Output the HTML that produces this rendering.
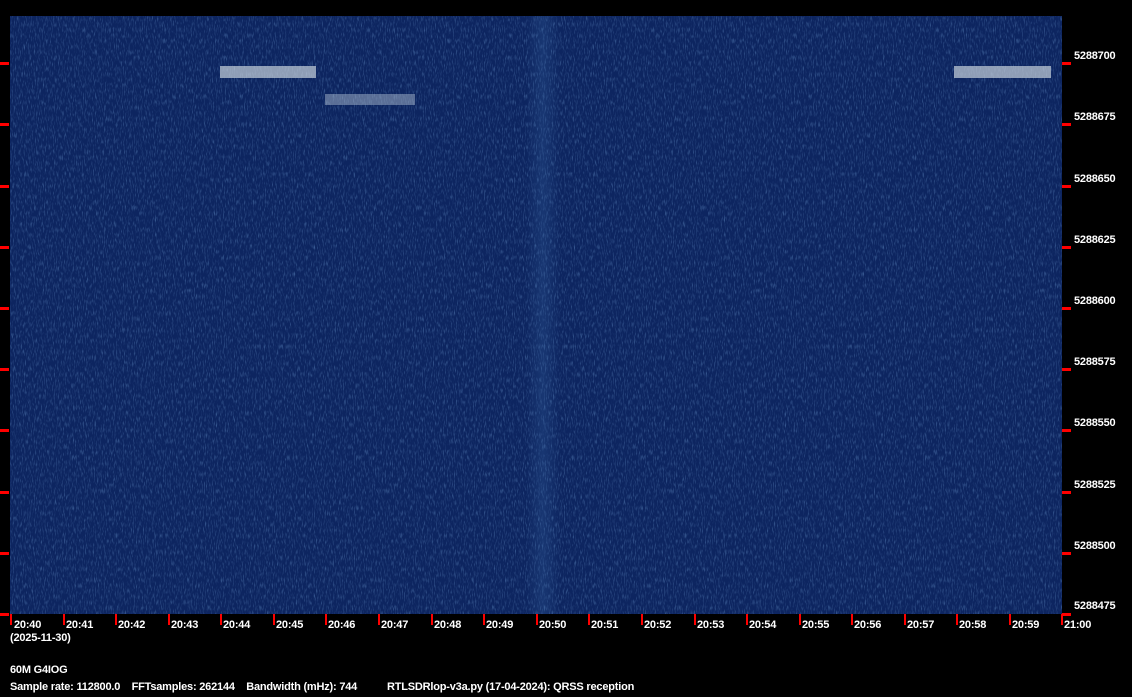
<!DOCTYPE html>
<html><head><meta charset="utf-8"><style>
html,body{margin:0;padding:0;background:#000;}
body{width:1132px;height:697px;position:relative;overflow:hidden;font-family:"Liberation Sans",sans-serif;font-weight:bold;font-size:11px;color:#fff;}
.t{position:absolute;white-space:nowrap;line-height:12px;letter-spacing:-0.2px;}
</style></head><body>
<svg width="1132" height="697" style="position:absolute;left:0;top:0">
<defs>
<filter id="n" x="0" y="0" width="100%" height="100%">
<feTurbulence type="fractalNoise" baseFrequency="0.9 0.18" numOctaves="2" seed="3"/>
<feColorMatrix type="matrix" values="0 0 0 0 0.15  0 0 0 0 0.32  0 0 0 0 0.62  0 0 0 1.2 -0.6"/>
</filter>
<linearGradient id="band" x1="0" x2="1">
<stop offset="0" stop-color="#3a6aa8" stop-opacity="0"/>
<stop offset="0.5" stop-color="#3a6aa8" stop-opacity="0.25"/>
<stop offset="1" stop-color="#3a6aa8" stop-opacity="0"/>
</linearGradient>
</defs>
<rect x="10" y="16" width="1052" height="598" fill="#0d2560"/>
<rect x="10" y="16" width="1052" height="598" filter="url(#n)"/>
<rect x="526" y="16" width="34" height="598" fill="url(#band)"/>
<rect x="220" y="66" width="96" height="12" fill="#c8d2dc" opacity="0.7"/>
<rect x="325" y="94" width="90" height="11" fill="#a8b8cc" opacity="0.5"/>
<rect x="954" y="66" width="97" height="12" fill="#c8d2dc" opacity="0.7"/>
<g fill="#f00">
<rect x="0" y="62" width="9" height="3"/><rect x="0" y="123" width="9" height="3"/><rect x="0" y="185" width="9" height="3"/><rect x="0" y="246" width="9" height="3"/><rect x="0" y="307" width="9" height="3"/><rect x="0" y="368" width="9" height="3"/><rect x="0" y="429" width="9" height="3"/><rect x="0" y="491" width="9" height="3"/><rect x="0" y="552" width="9" height="3"/><rect x="0" y="613" width="9" height="3"/>
<rect x="1062" y="62" width="9" height="3"/><rect x="1062" y="123" width="9" height="3"/><rect x="1062" y="185" width="9" height="3"/><rect x="1062" y="246" width="9" height="3"/><rect x="1062" y="307" width="9" height="3"/><rect x="1062" y="368" width="9" height="3"/><rect x="1062" y="429" width="9" height="3"/><rect x="1062" y="491" width="9" height="3"/><rect x="1062" y="552" width="9" height="3"/><rect x="1062" y="613" width="9" height="3"/>
<rect x="10" y="614" width="2" height="11"/><rect x="63" y="614" width="2" height="11"/><rect x="115" y="614" width="2" height="11"/><rect x="168" y="614" width="2" height="11"/><rect x="220" y="614" width="2" height="11"/><rect x="273" y="614" width="2" height="11"/><rect x="325" y="614" width="2" height="11"/><rect x="378" y="614" width="2" height="11"/><rect x="431" y="614" width="2" height="11"/><rect x="483" y="614" width="2" height="11"/><rect x="536" y="614" width="2" height="11"/><rect x="588" y="614" width="2" height="11"/><rect x="641" y="614" width="2" height="11"/><rect x="694" y="614" width="2" height="11"/><rect x="746" y="614" width="2" height="11"/><rect x="799" y="614" width="2" height="11"/><rect x="851" y="614" width="2" height="11"/><rect x="904" y="614" width="2" height="11"/><rect x="956" y="614" width="2" height="11"/><rect x="1009" y="614" width="2" height="11"/><rect x="1061" y="614" width="2" height="11"/>
</g>
</svg>
<div class="t" style="left:1074px;top:50px">5288700</div>
<div class="t" style="left:1074px;top:111px">5288675</div>
<div class="t" style="left:1074px;top:173px">5288650</div>
<div class="t" style="left:1074px;top:234px">5288625</div>
<div class="t" style="left:1074px;top:295px">5288600</div>
<div class="t" style="left:1074px;top:356px">5288575</div>
<div class="t" style="left:1074px;top:417px">5288550</div>
<div class="t" style="left:1074px;top:479px">5288525</div>
<div class="t" style="left:1074px;top:540px">5288500</div>
<div class="t" style="left:1074px;top:600px">5288475</div>
<div class="t" style="left:14px;top:619px">20:40</div>
<div class="t" style="left:66px;top:619px">20:41</div>
<div class="t" style="left:118px;top:619px">20:42</div>
<div class="t" style="left:171px;top:619px">20:43</div>
<div class="t" style="left:223px;top:619px">20:44</div>
<div class="t" style="left:276px;top:619px">20:45</div>
<div class="t" style="left:328px;top:619px">20:46</div>
<div class="t" style="left:381px;top:619px">20:47</div>
<div class="t" style="left:434px;top:619px">20:48</div>
<div class="t" style="left:486px;top:619px">20:49</div>
<div class="t" style="left:539px;top:619px">20:50</div>
<div class="t" style="left:591px;top:619px">20:51</div>
<div class="t" style="left:644px;top:619px">20:52</div>
<div class="t" style="left:697px;top:619px">20:53</div>
<div class="t" style="left:749px;top:619px">20:54</div>
<div class="t" style="left:802px;top:619px">20:55</div>
<div class="t" style="left:854px;top:619px">20:56</div>
<div class="t" style="left:907px;top:619px">20:57</div>
<div class="t" style="left:959px;top:619px">20:58</div>
<div class="t" style="left:1012px;top:619px">20:59</div>
<div class="t" style="left:1064px;top:619px">21:00</div>
<div class="t" style="left:10px;top:632px">(2025-11-30)</div>
<div class="t" style="left:10px;top:664px">60M G4IOG</div>
<div class="t" style="left:10px;top:681px">Sample rate: 112800.0&nbsp;&nbsp;&nbsp;&nbsp;FFTsamples: 262144&nbsp;&nbsp;&nbsp;&nbsp;Bandwidth (mHz): 744</div>
<div class="t" style="left:387px;top:681px">RTLSDRlop-v3a.py (17-04-2024): QRSS reception</div>
</body></html>
